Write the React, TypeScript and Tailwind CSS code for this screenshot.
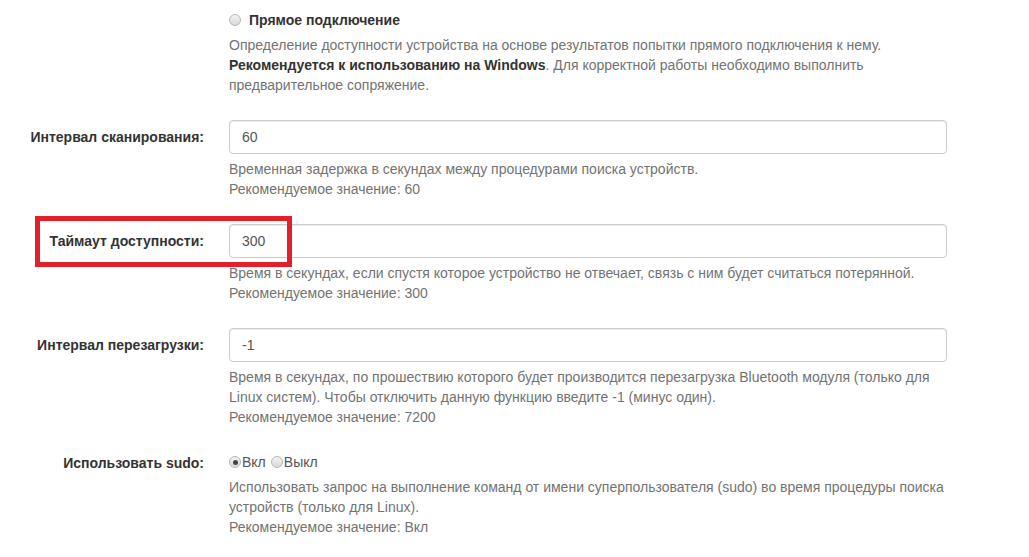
import React from "react";

const font = { fontFamily: '"Liberation Sans", Arial, sans-serif' };

function Radio({ checked = false }: { checked?: boolean }) {
  return (
    <span className="inline-flex h-[12px] w-[12px] shrink-0 items-center justify-center rounded-full border border-[#b5b5b5] bg-gradient-to-b from-[#f4f4f4] to-[#d9d9d9]">
      {checked && <span className="h-[5px] w-[5px] rounded-full bg-[#444]" />}
    </span>
  );
}

function Help({ children }: { children: React.ReactNode }) {
  return <div className="mt-[5px] mb-[10px] text-[14px] leading-[20px] text-[#737373]">{children}</div>;
}

function InputRow({
  label,
  value,
  children,
}: {
  label: string;
  value: string;
  children: React.ReactNode;
}) {
  return (
    <div className="mb-[15px] flex">
      <label className="w-[229px] shrink-0 pr-[25px] pt-[7px] text-right text-[14px] font-bold leading-[20px] text-[#333]">
        {label}
      </label>
      <div className="w-[718px]">
        <div className="flex h-[34px] items-center rounded-[4px] border border-[#ccc] px-[12px] text-[14px] text-[#555] shadow-[inset_0_1px_1px_rgba(0,0,0,0.075)]">
          {value}
        </div>
        <Help>{children}</Help>
      </div>
    </div>
  );
}

export default function App() {
  return (
    <div className="relative min-h-[557px] w-[1029px] bg-white pt-[10px]" style={font}>
      <div className="mb-[15px] flex">
        <div className="w-[229px] shrink-0" />
        <div className="w-[718px]">
          <div className="flex h-[20px] items-center gap-[8px] text-[14px] font-bold text-[#333]">
            <Radio />
            Прямое подключение
          </div>
          <Help>
            Определение доступности устройства на основе результатов попытки прямого подключения к нему.{" "}
            <b className="text-[#333]">Рекомендуется к использованию на Windows</b>. Для корректной работы необходимо
            выполнить предварительное сопряжение.
          </Help>
        </div>
      </div>

      <InputRow label="Интервал сканирования:" value="60">
        Временная задержка в секундах между процедурами поиска устройств.
        <br />
        Рекомендуемое значение: 60
      </InputRow>

      <InputRow label="Таймаут доступности:" value="300">
        Время в секундах, если спустя которое устройство не отвечает, связь с ним будет считаться потерянной.
        <br />
        Рекомендуемое значение: 300
      </InputRow>

      <InputRow label="Интервал перезагрузки:" value="-1">
        Время в секундах, по прошествию которого будет производится перезагрузка Bluetooth модуля (только для
        Linux систем). Чтобы отключить данную функцию введите -1 (минус один).
        <br />
        Рекомендуемое значение: 7200
      </InputRow>

      <div className="mt-[2px] flex">
        <label className="w-[229px] shrink-0 pr-[25px] pt-px text-right text-[14px] font-bold leading-[20px] text-[#333]">
          Использовать sudo:
        </label>
        <div className="w-[718px]">
          <div className="flex h-[20px] items-center text-[14px] text-[#555]">
            <Radio checked />
            <span className="ml-px">Вкл</span>
            <span className="ml-[5px]" />
            <Radio />
            <span className="ml-px">Выкл</span>
          </div>
          <Help>
            Использовать запрос на выполнение команд от имени суперпользователя (sudo) во время процедуры поиска
            устройств (только для Linux).
            <br />
            Рекомендуемое значение: Вкл
          </Help>
        </div>
      </div>

      <div className="pointer-events-none absolute left-[35px] top-[216px] h-[51px] w-[257px] border-[5px] border-[#e3202a]" />
    </div>
  );
}
